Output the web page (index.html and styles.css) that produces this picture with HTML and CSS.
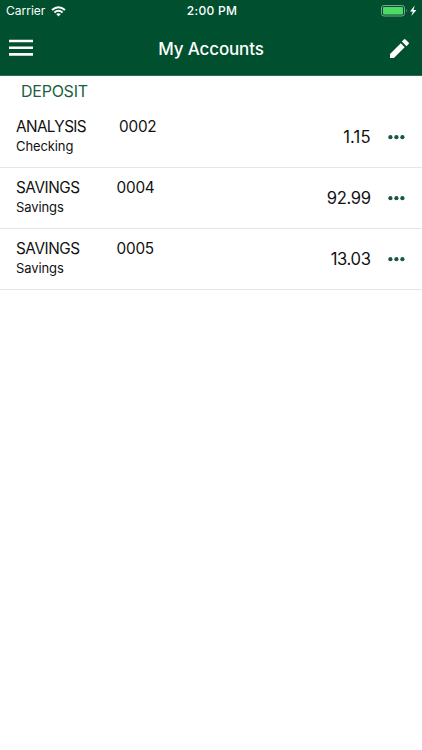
FILE: index.html
```
<!DOCTYPE html>
<html lang="en">
<head>
<meta charset="utf-8">
<title>My Accounts</title>
<link rel="stylesheet" href="styles.css">
</head>
<body>
<header class="header">
  <div class="status">
    <div class="carrier"><span>Carrier</span>
      <svg class="wifi" width="15" height="11" viewBox="0 0 15 11" fill="none" stroke="#fff" stroke-width="2"><path d="M1 4Q7.500-1.600 14 4M3.400 6.500Q7.500 3 11.600 6.500"/><path d="M5.200 8Q7.500 6.300 9.800 8L7.500 10.400Z" fill="#fff" stroke="none"/></svg>
    </div>
    <time class="clock">2:00 PM</time>
    <div class="power">
      <svg width="36" height="12" viewBox="0 0 36 12"><rect x=".5" y=".5" width="23" height="10.500" rx="2.500" fill="none" stroke="#7fa496"/><rect x="2" y="2" width="20" height="7.500" rx="1" fill="#4cd964"/><path d="M25 4Q26.500 5.700 25 7.500Z" fill="#7fa496"/><path d="M33.700 .5L29 6.400H31.800L30.300 11L35.400 4.900H32.500Z" fill="#fff"/></svg>
    </div>
  </div>
  <nav class="nav">
    <svg class="menu" width="24" height="18" viewBox="0 0 24 18" fill="#fff"><path d="M0 .7H24V3.300H0ZM0 7.400H24V10H0ZM0 14.100H24V16.700H0Z"/></svg>
    <h1 class="title">My Accounts</h1>
    <svg class="edit" width="19" height="19" viewBox="0 0 19 19" fill="#fff"><path d="M0 15.100V19H3.900L14.700 8.200L10.800 4.300ZM18.600 5.100Q19.300 4.300 18.600 3.500L15.500.4Q14.700-.3 13.900.4L11.800 2.500L16.500 7.200Z"/></svg>
  </nav>
</header>
<main>
  <h2 class="section">DEPOSIT</h2>
  <ul class="accounts">
    <li class="account">
      <div class="info"><div class="name"><span class="label analysis">ANALYSIS</span><span class="number">0002</span></div><div class="type">Checking</div></div>
      <span class="amount">1.15</span>
      <svg class="more" width="17" height="5" viewBox="0 0 17 5"><circle cx="2.400" cy="2.200" r="2.100"/><circle cx="8.400" cy="2.200" r="2.100"/><circle cx="14.400" cy="2.200" r="2.100"/></svg>
    </li>
    <li class="account">
      <div class="info"><div class="name"><span class="label">SAVINGS</span><span class="number">0004</span></div><div class="type">Savings</div></div>
      <span class="amount">92.99</span>
      <svg class="more" width="17" height="5" viewBox="0 0 17 5"><circle cx="2.400" cy="2.200" r="2.100"/><circle cx="8.400" cy="2.200" r="2.100"/><circle cx="14.400" cy="2.200" r="2.100"/></svg>
    </li>
    <li class="account">
      <div class="info"><div class="name"><span class="label">SAVINGS</span><span class="number">0005</span></div><div class="type">Savings</div></div>
      <span class="amount">13.03</span>
      <svg class="more" width="17" height="5" viewBox="0 0 17 5"><circle cx="2.400" cy="2.200" r="2.100"/><circle cx="8.400" cy="2.200" r="2.100"/><circle cx="14.400" cy="2.200" r="2.100"/></svg>
    </li>
  </ul>
</main>
</body>
</html>
```

FILE: styles.css
```
* { box-sizing: border-box; }
body { margin: 0; min-height: 750px; background: #fff; color: #111; font-family: Inter, "Liberation Sans", sans-serif; }
svg { display: block; flex: none; }
.header { height: 76px; background: #00502f; border-bottom: 1px solid #2d6e53; color: #fff; }
.status { display: grid; grid-template-columns: 1fr auto 1fr; height: 22px; align-items: center; padding: 0 4px 0 6px; font-size: 12px; line-height: 22px; }
.carrier { display: flex; align-items: center; gap: 6px; }
.clock { font-weight: 500; letter-spacing: .3px; }
.power { display: flex; justify-content: flex-end; padding-right: 1px; }
.nav { display: grid; grid-template-columns: 1fr auto 1fr; align-items: center; height: 52px; padding: 0 9px; }
.title { margin: 0; padding-top: 2px; font-size: 17px; font-weight: 500; line-height: 24px; letter-spacing: -.15px; }
.edit { justify-self: end; margin-right: 4px; }
.section { margin: 0; height: 31px; padding-left: 21px; font-size: 16px; font-weight: 400; line-height: 31px; letter-spacing: -.25px; color: #1b5f43; }
.accounts { margin: 0; padding: 0; list-style: none; }
.account { display: flex; height: 61px; border-bottom: 1px solid #e6e6e6; padding: 0 17px 0 16px; align-items: center; }
.info { flex: 1; align-self: flex-start; padding-top: 9px; }
.name { display: flex; font-size: 15.3px; line-height: 21px; letter-spacing: -.45px; }
.number { letter-spacing: -.2px; }
.label { width: 100.5px; }
.analysis { width: 103px; letter-spacing: -.6px; }
.type { font-size: 13px; line-height: 18px; letter-spacing: -.1px; }
.amount { font-size: 16.6px; line-height: 24px; letter-spacing: -.35px; margin-right: 17.4px; }
.account:first-child .amount { letter-spacing: .1px; }
.more { fill: #16583c; }
```
